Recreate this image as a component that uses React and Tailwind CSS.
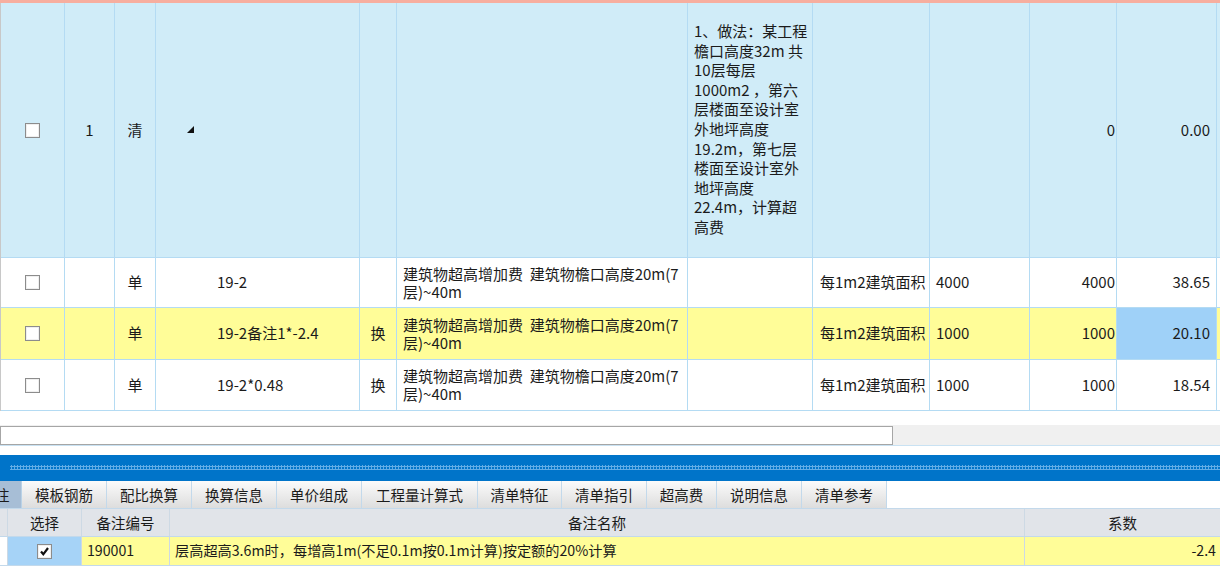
import React from "react";

const WCLS = [
  "w-[64px]", "w-[50px]", "w-[41px]", "w-[204px]", "w-[37px]", "w-[291px]",
  "w-[125px]", "w-[117px]", "w-[100px]", "w-[87px]", "w-[100px]",
];

function Box({ checked }) {
  return (
    <span className="inline-flex items-center justify-center w-[15px] h-[15px] border border-[#8c8c8c] bg-white shadow-[inset_0_0_0_1px_#efefef]">
      {checked && (
        <svg width="11" height="11" viewBox="0 0 11 11">
          <path d="M2 5.5 L4.3 8.3 L9 2" fill="none" stroke="#111" strokeWidth="2.2" />
        </svg>
      )}
    </span>
  );
}

function Cell({ i, children, cls = "" }) {
  return (
    <div
      className={
        WCLS[i] +
        " shrink-0 border-r border-[#b4dbf3] flex items-center overflow-hidden whitespace-nowrap " +
        cls
      }
    >
      {children}
    </div>
  );
}

function Row({ h, bg, cells, hl }) {
  return (
    <div className={"flex border-b border-[#b4dbf3] " + h + " " + bg}>
      {cells.map((c, i) => (
        <Cell key={i} i={i} cls={(hl === i ? "bg-[#9fd1f8] " : "") + (c.cls || "")}>
          {c.v}
        </Cell>
      ))}
      <div className="flex-1" />
    </div>
  );
}

const Tri = () => (
  <svg width="8" height="8" viewBox="0 0 8 8" className="ml-[31px] mb-[1px]">
    <polygon points="7,0 7,7 0,7" fill="#111" />
  </svg>
);

const desc = (
  <div className="flex flex-col leading-[18px]">
    <span>建筑物超高增加费&nbsp;&nbsp;建筑物檐口高度20m(7</span>
    <span>层)~40m</span>
  </div>
);

const noteLines = [
  "1、做法：某工程",
  "檐口高度32m 共",
  "10层每层",
  "1000m2 ，第六",
  "层楼面至设计室",
  "外地坪高度",
  "19.2m，第七层",
  "楼面至设计室外",
  "地坪高度",
  "22.4m，计算超",
  "高费",
];

export default function App() {
  const font = "font-['Noto_Sans_CJK_SC','Noto_Sans',sans-serif]";
  const subRow = (code, huan, a, b, c) => [
    { v: <Box />, cls: "justify-center" },
    { v: "" },
    { v: "单", cls: "justify-center" },
    { v: code, cls: "pl-[61px]" },
    { v: huan, cls: "justify-center" },
    { v: desc, cls: "pl-[6px]" },
    { v: "" },
    { v: "每1m2建筑面积", cls: "pl-[7px]" },
    { v: a, cls: "pl-[6px]" },
    { v: b, cls: "justify-end pr-[1px]" },
    { v: c, cls: "justify-end pr-[6px]" },
  ];

  const tabs = [
    ["模板钢筋", "w-[85px]"],
    ["配比换算", "w-[85px]"],
    ["换算信息", "w-[85px]"],
    ["单价组成", "w-[85px]"],
    ["工程量计算式", "w-[116px]"],
    ["清单特征", "w-[84px]"],
    ["清单指引", "w-[85px]"],
    ["超高费", "w-[70px]"],
    ["说明信息", "w-[85px]"],
    ["清单参考", "w-[85px]"],
  ];

  return (
    <div className={"w-[1220px] h-[571px] overflow-hidden bg-white text-[#1b1b1b] " + font}>
      <div className="h-[3px] bg-[#f7ae9f]" />
      <div className="border-l border-[#c8c8c8] text-[15px]">
        <Row
          h="h-[255px]"
          bg="bg-[#d0ecf8]"
          cells={[
            { v: <Box />, cls: "justify-center" },
            { v: "1", cls: "justify-center" },
            { v: "清", cls: "justify-center" },
            { v: <Tri /> },
            { v: "" },
            { v: "" },
            {
              v: (
                <div className="flex flex-col leading-[19.6px]">
                  {noteLines.map((l) => (
                    <span key={l}>{l}</span>
                  ))}
                </div>
              ),
              cls: "pl-[6px] items-start pt-[18px]",
            },
            { v: "" },
            { v: "" },
            { v: "0", cls: "justify-end pr-[1px]" },
            { v: "0.00", cls: "justify-end pr-[6px]" },
          ]}
        />
        <Row h="h-[50px]" bg="bg-white" cells={subRow("19-2", "", "4000", "4000", "38.65")} />
        <Row h="h-[52px]" bg="bg-[#fffd98]" hl={10} cells={subRow("19-2备注1*-2.4", "换", "1000", "1000", "20.10")} />
        <Row h="h-[51px]" bg="bg-white" cells={subRow("19-2*0.48", "换", "1000", "1000", "18.54")} />
      </div>

      <div className="h-[14px]" />
      <div className="h-[20px] flex bg-[#f0f0f0]">
        <div className="w-[893px] h-[19px] mt-[1px] bg-white border border-[#a6a6a6]" />
      </div>
      <div className="h-[10px] border-t border-[#c9e2f3]" />

      <div className="h-[26px] bg-[#0074c9] pt-[10px] pl-[10px]">
        <div className="h-[5px] bg-[radial-gradient(circle,#63ade6_1px,transparent_1.2px)] bg-[length:3px_3px]" />
      </div>

      <div className="h-[28px] flex border-b border-[#c3d9eb] text-[14.5px]">
        <div className="w-[22px] shrink-0 bg-[#a7bed6] border-r border-[#b9d2e7] flex items-center overflow-hidden">
          <span className="ml-[-5px]">注</span>
        </div>
        {tabs.map(([t, w]) => (
          <div
            key={t}
            className={w + " shrink-0 border-r border-[#c3d9eb] bg-gradient-to-b from-[#fbfbfb] to-[#dddddd] flex items-center justify-center"}
          >
            {t}
          </div>
        ))}
        <div className="flex-1 bg-white" />
      </div>

      <div className="h-[28px] flex bg-[#e1e4e9] border-b border-[#c3d9eb] text-[14.5px]">
        <div className="w-[8px] shrink-0 border-r border-[#cdd9e4]" />
        <div className="w-[74px] shrink-0 border-r border-[#cdd9e4] flex items-center justify-center">选择</div>
        <div className="w-[88px] shrink-0 border-r border-[#cdd9e4] flex items-center justify-center">备注编号</div>
        <div className="w-[855px] shrink-0 border-r border-[#cdd9e4] flex items-center justify-center">备注名称</div>
        <div className="flex-1 flex items-center justify-center">系数</div>
      </div>

      <div className="h-[29px] flex border-b border-[#c3d9eb] text-[14.2px]">
        <div className="w-[8px] shrink-0 border-r border-[#cdd9e4] bg-white" />
        <div className="w-[74px] shrink-0 border-r border-[#cdd9e4] bg-[#a6d3f7] flex items-center justify-center">
          <Box checked />
        </div>
        <div className="w-[88px] shrink-0 border-r border-[#cdd9e4] bg-[#fffd98] flex items-center pl-[5px]">190001</div>
        <div className="w-[855px] shrink-0 border-r border-[#cdd9e4] bg-[#fffd98] flex items-center pl-[5px]">
          层高超高3.6m时，每增高1m(不足0.1m按0.1m计算)按定额的20%计算
        </div>
        <div className="flex-1 bg-[#fffd98] flex items-center justify-end pr-[4px]">-2.4</div>
      </div>
    </div>
  );
}
